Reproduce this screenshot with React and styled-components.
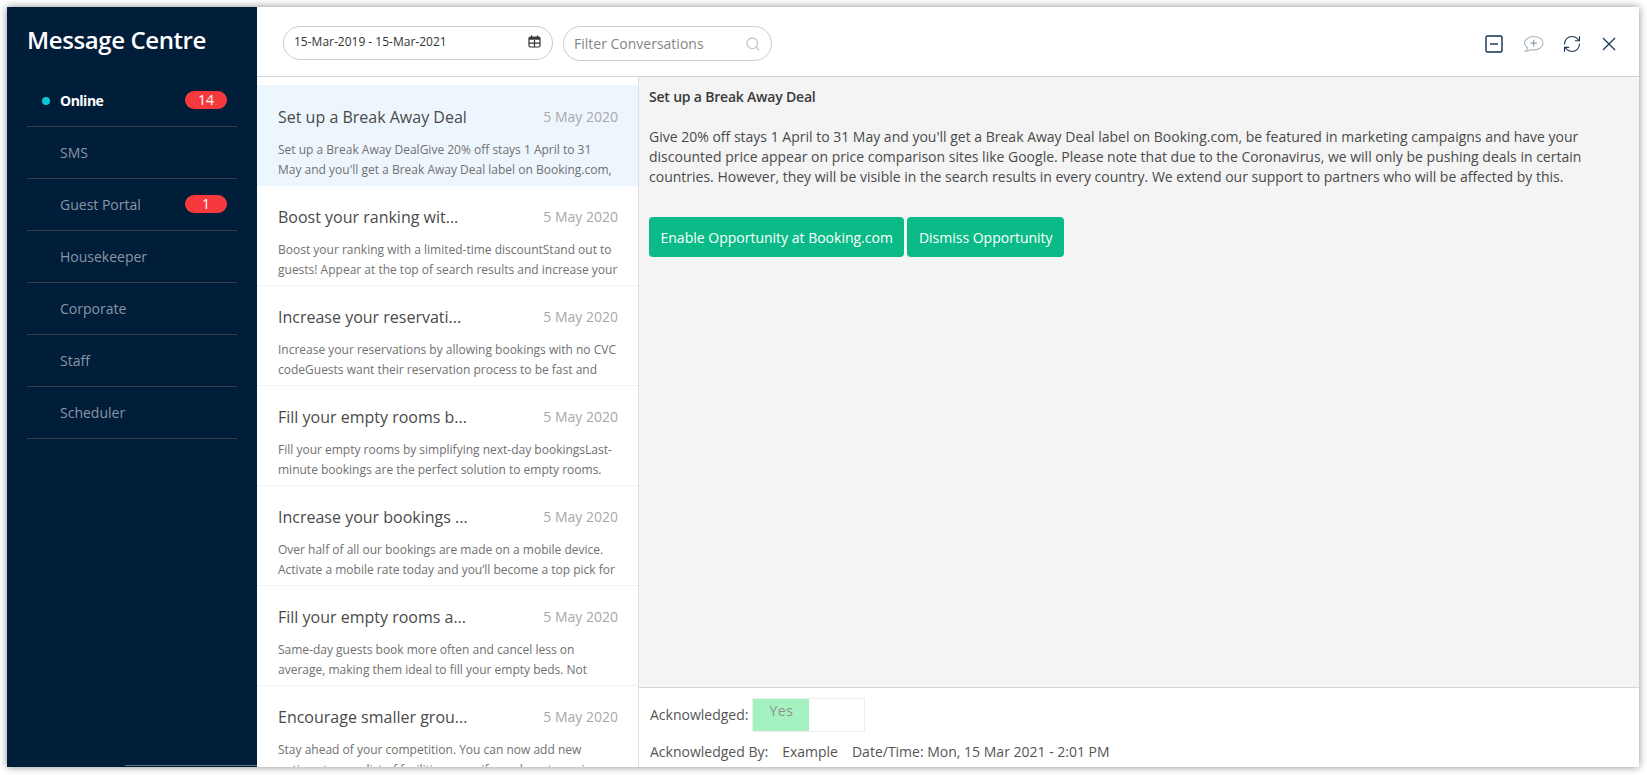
import styled, { createGlobalStyle } from "styled-components";
import { Search, RefreshCw } from "lucide-react";

const Global = createGlobalStyle`
  html, body { margin: 0; padding: 0; background: #fff; }
  body { font-family: "Open Sans", "Liberation Sans", sans-serif; color: #444; }
  * { box-sizing: border-box; }
`;

const Page = styled.div`
  width: 1647px;
  height: 775px;
  padding: 7px 8px 8px 7px;
  overflow: hidden;
`;

const Win = styled.div`
  display: flex;
  height: 760px;
  background: #fff;
  box-shadow: 0 0 8px rgba(0, 0, 0, 0.45);
`;

const Side = styled.aside`
  position: relative;
  width: 250px;
  flex: none;
  padding: 0 20px;
  background: #001d3a;
`;

const SideLine = styled.div`
  position: absolute;
  left: 118px;
  right: 0;
  bottom: 1px;
  height: 1px;
  background: #5f7186;
`;

const Brand = styled.h1`
  margin: 0;
  height: 68px;
  font-size: 24px;
  font-weight: 600;
  line-height: 66px;
  letter-spacing: -0.4px;
  color: #fff;
`;

const NavRow = styled.div`
  position: relative;
  display: flex;
  align-items: center;
  justify-content: space-between;
  height: 52px;
  padding: 0 10px 1px 33px;
  border-bottom: 1px solid #3c3f49;
  font-size: 14px;
  font-weight: ${(p) => (p.$active ? 700 : 400)};
  color: ${(p) => (p.$active ? "#fff" : "#8b96a5")};
  letter-spacing: ${(p) => (p.$active ? "-0.5px" : "0")};
`;

const Dot = styled.span`
  position: absolute;
  left: 15px;
  top: 22px;
  width: 8px;
  height: 8px;
  border-radius: 50%;
  background: #0bc7d3;
`;

const Badge = styled.span`
  width: 42px;
  height: 18px;
  border-radius: 9px;
  background: #f6393d;
  color: #fff;
  font-size: 14px;
  font-weight: 400;
  line-height: 18px;
  text-align: center;
  letter-spacing: 0;
`;

const Main = styled.div`
  flex: 1;
  min-width: 0;
  display: flex;
  flex-direction: column;
`;

const Toolbar = styled.header`
  display: flex;
  align-items: center;
  height: 70px;
  flex: none;
  padding: 3px 23px 0 26px;
  border-bottom: 1px solid #d3d3d6;
`;

const DatePill = styled.div`
  display: flex;
  align-items: center;
  justify-content: space-between;
  width: 270px;
  height: 34px;
  padding: 0 11px 3px 10px;
  border: 1px solid #ccc;
  border-radius: 17px;
  font-size: 12px;
  color: #333;
`;

const FilterPill = styled.div`
  display: flex;
  align-items: center;
  justify-content: space-between;
  width: 209px;
  height: 35px;
  margin-left: 10px;
  padding: 1px 10px 0 10px;
  border: 1px solid #ccc;
  border-radius: 18px;
  font-size: 14px;
  color: #858585;
`;

const Tools = styled.div`
  display: flex;
  align-items: center;
  margin-left: auto;
  padding-top: 1px;
  color: #1b3654;
`;

const Tool = styled.span`
  display: flex;
  margin-left: ${(p) => p.$gap}px;
`;

const Body = styled.div`
  flex: 1;
  min-height: 0;
  display: flex;
`;

const List = styled.div`
  width: 382px;
  flex: none;
  padding-top: 8px;
  overflow: hidden;
  border-right: 1px solid #dfdfe6;
`;

const Item = styled.div`
  height: ${(p) => (p.$active ? 101 : 100)}px;
  padding: ${(p) => (p.$active ? 20 : 19)}px 20px 0 21px;
  background: ${(p) => (p.$active ? "#eef6fd" : "#fff")};
  border-bottom: 1px solid ${(p) => (p.$active ? "#eef6fd" : "#f2f2f2")};
`;

const ItemHead = styled.div`
  display: flex;
  justify-content: space-between;
  align-items: center;
  height: 24px;
`;

const ItemTitle = styled.span`
  font-size: 16px;
  color: #4a4a4a;
`;

const ItemDate = styled.span`
  padding-bottom: 2px;
  font-size: 14px;
  color: #a8a8a8;
`;

const ItemText = styled.p`
  margin: 11px 0 0;
  height: 40px;
  padding-right: 0.5px;
  overflow: hidden;
  font-size: 12px;
  line-height: 20px;
  color: #707070;
`;

const Detail = styled.section`
  flex: 1;
  min-width: 0;
  display: flex;
  flex-direction: column;
`;

const Content = styled.div`
  flex: 1;
  padding: 10px 10px 0;
  background: #f4f4f4;
  font-size: 14px;
  line-height: 20px;
  color: #4a4a4a;
`;

const Heading = styled.div`
  font-weight: 600;
  color: #3a3a3a;
  letter-spacing: -0.2px;
`;

const Para = styled.p`
  margin: 20px 0 30px;
`;

const Buttons = styled.div`
  display: flex;
  gap: 3px;
`;

const Button = styled.button`
  height: 40px;
  padding: 0 11.5px;
  border: 0;
  border-radius: 4px;
  background: #0abb87;
  color: #fff;
  font: 500 14px "Open Sans", sans-serif;
`;

const Footer = styled.footer`
  height: 80px;
  flex: none;
  padding: 9px 11px 0;
  border-top: 1px solid #d3d3db;
  font-size: 14px;
  color: #555;
`;

const AckRow = styled.div`
  display: flex;
  align-items: center;
  gap: 4px;
  height: 35px;
`;

const Toggle = styled.div`
  display: flex;
  width: 113px;
  height: 34px;
  margin-top: 1px;
  border: 1px solid #eee;
`;

const ToggleOn = styled.span`
  width: 56px;
  padding-top: 1px;
  background: #a3f2c0;
  color: #919191;
  text-align: center;
  line-height: 22px;
  letter-spacing: 0.5px;
`;

const ByRow = styled.div`
  display: flex;
  margin-top: 10px;
  line-height: 20px;
`;

const ByName = styled.span`
  margin: 0 14px 0 14px;
`;

const nav = [
  { name: "Online", count: 14, active: true },
  { name: "SMS" },
  { name: "Guest Portal", count: 1 },
  { name: "Housekeeper" },
  { name: "Corporate" },
  { name: "Staff" },
  { name: "Scheduler" },
];

const items = [
  ["Set up a Break Away Deal", "Set up a Break Away DealGive 20% off stays 1 April to 31 May and you'll get a Break Away Deal label on Booking.com,"],
  ["Boost your ranking wit...", "Boost your ranking with a limited-time discountStand out to guests! Appear at the top of search results and increase your"],
  ["Increase your reservati...", "Increase your reservations by allowing bookings with no CVC codeGuests want their reservation process to be fast and"],
  ["Fill your empty rooms b...", "Fill your empty rooms by simplifying next-day bookingsLast-minute bookings are the perfect solution to empty rooms."],
  ["Increase your bookings ...", "Over half of all our bookings are made on a mobile device. Activate a mobile rate today and you’ll become a top pick for"],
  ["Fill your empty rooms a...", "Same-day guests book more often and cancel less on average, making them ideal to fill your empty beds. Not"],
  ["Encourage smaller grou...", "Stay ahead of your competition. You can now add new options to your list of facilities, even if you do not require"],
];

function App() {
  return (
    <Page>
      <Global />
      <Win>
        <Side>
          <Brand>Message Centre</Brand>
          {nav.map((n) => (
            <NavRow key={n.name} $active={n.active}>
              {n.active && <Dot />}
              <span>{n.name}</span>
              {n.count && <Badge>{n.count}</Badge>}
            </NavRow>
          ))}
          <SideLine />
        </Side>
        <Main>
          <Toolbar>
            <DatePill>
              15-Mar-2019 - 15-Mar-2021
              <svg width="13" height="13" viewBox="0 0 13 13" fill="none" stroke="#333" strokeWidth="1.2">
                <path d="M3.5 .5v2.5M9.5 .5v2.5" />
                <rect x="1" y="2" width="11" height="10" rx="1.5" />
                <path d="M1 3.5h11" strokeWidth="2.4" />
                <path d="M1 8.2h11M6.5 5v7" />
              </svg>
            </DatePill>
            <FilterPill>
              Filter Conversations
              <Search size={16} color="#c9c9c9" />
            </FilterPill>
            <Tools>
              <Tool>
                <svg width="18" height="18" viewBox="0 0 18 18" fill="none" stroke="#0f2f52" strokeWidth="1.4">
                  <rect x="1" y="1" width="16" height="16" rx="1.5" />
                  <path d="M5 9h8" />
                </svg>
              </Tool>
              <Tool $gap={20}>
                <svg width="21" height="18" viewBox="0 0 21 18" fill="none" stroke="#a9b5c1" strokeWidth="1.1">
                  <path d="M11 1.5c5 0 9 2.9 9 6.7s-4 6.7-9 6.7c-1.2 0-2.2-.1-3.2-.5-1.3 1.1-3 1.8-5.3 2 1.2-1 1.9-2.2 2-3.7C2.5 11.5 1.5 10 1.5 8.2 1.5 4.4 6 1.5 11 1.5z" />
                  <path d="M10.7 4.8v6.6M7.4 8.1h6.6" stroke="#8d9cab" />
                </svg>
              </Tool>
              <Tool $gap={18}>
                <RefreshCw size={20} strokeWidth={1.3} />
              </Tool>
              <Tool $gap={20}>
                <svg width="14" height="14" viewBox="0 0 14 14" fill="none" stroke="#1b3654" strokeWidth="1.3">
                  <path d="M1 1l12 12M13 1L1 13" />
                </svg>
              </Tool>
            </Tools>
          </Toolbar>
          <Body>
            <List>
              {items.map(([title, text], i) => (
                <Item key={title} $active={i === 0}>
                  <ItemHead>
                    <ItemTitle>{title}</ItemTitle>
                    <ItemDate>5 May 2020</ItemDate>
                  </ItemHead>
                  <ItemText>{text}</ItemText>
                </Item>
              ))}
            </List>
            <Detail>
              <Content>
                <Heading>Set up a Break Away Deal</Heading>
                <Para>
                  Give 20% off stays 1 April to 31 May and you'll get a Break Away Deal label on Booking.com, be featured in
                  marketing campaigns and have your discounted price appear on price comparison sites like Google. Please note
                  that due to the Coronavirus, we will only be pushing deals in certain countries. However, they will be visible
                  in the search results in every country. We extend our support to partners who will be affected by this.
                </Para>
                <Buttons>
                  <Button>Enable Opportunity at Booking.com</Button>
                  <Button>Dismiss Opportunity</Button>
                </Buttons>
              </Content>
              <Footer>
                <AckRow>
                  Acknowledged:
                  <Toggle>
                    <ToggleOn>Yes</ToggleOn>
                  </Toggle>
                </AckRow>
                <ByRow>
                  Acknowledged By:
                  <ByName>Example</ByName>
                  Date/Time: Mon, 15 Mar 2021 - 2:01 PM
                </ByRow>
              </Footer>
            </Detail>
          </Body>
        </Main>
      </Win>
    </Page>
  );
}

export default App;
